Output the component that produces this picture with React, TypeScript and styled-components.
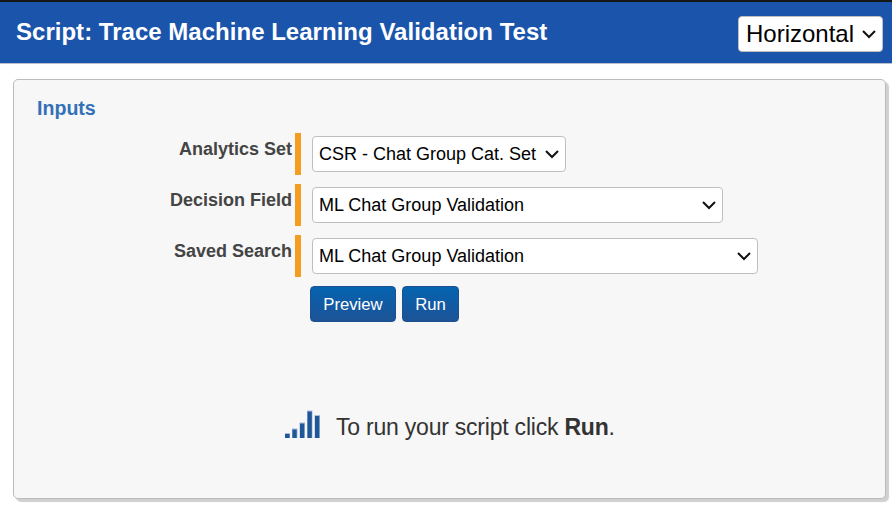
import React from "react";
import styled, { createGlobalStyle } from "styled-components";

const GlobalStyle = createGlobalStyle`
  * { box-sizing: border-box; }
  body {
    margin: 0;
    background: #fff;
    font-family: "Liberation Sans", Arial, sans-serif;
    color: #333;
    overflow: hidden;
  }
`;

const Page = styled.div`
  height: 507px;
`;

const Header = styled.header`
  display: flex;
  justify-content: space-between;
  align-items: flex-start;
  height: 64px;
  padding: 14px 9px 0 16px;
  background: #1b54ab;
  border-top: 2px solid #151719;
  border-bottom: 1px solid #b9c0cb;
`;

const Title = styled.h1`
  margin: 2px 0 0;
  font-size: 24px;
  line-height: 28px;
  font-weight: 700;
  letter-spacing: 0.02px;
  white-space: nowrap;
  color: #fff;
`;

const Picker = styled.button<{ $width: number; $large?: boolean }>`
  display: flex;
  align-items: center;
  justify-content: space-between;
  flex: none;
  width: ${(p) => p.$width}px;
  height: 36px;
  padding: 0 5px 0 ${(p) => (p.$large ? 7 : 6)}px;
  border: 1px solid #bfbfbf;
  border-radius: 4px;
  background: #fff;
  color: #000;
  font-family: inherit;
  font-size: ${(p) => (p.$large ? 24 : 18)}px;
  line-height: 1;
  white-space: nowrap;
`;

const Chevron = styled.svg`
  flex: none;
  width: 16px;
  height: 10px;
  fill: none;
  stroke: #111;
  stroke-width: 2;
`;

const Panel = styled.main`
  width: 873px;
  height: 420px;
  margin: 15px 0 0 13px;
  padding: 16px 23px 0;
  background: #f7f7f7;
  border: 1px solid #bcbcbc;
  border-radius: 5px;
  box-shadow: 3px 3px 1px #d0d0d0;
`;

const SectionTitle = styled.h2`
  margin: 0 0 13px;
  font-size: 19.6px;
  line-height: 24px;
  font-weight: 700;
  color: #3470b8;
`;

const Fields = styled.div`
  display: grid;
  gap: 9px;
`;

const Field = styled.div`
  display: grid;
  grid-template-columns: 256px 6px auto;
  justify-content: start;
  align-items: center;
  height: 42px;
`;

const Label = styled.label`
  align-self: start;
  padding: 4px 1px 0 0;
  text-align: right;
  font-size: 18px;
  line-height: 24px;
  font-weight: 700;
  color: #444;
`;

const RequiredBar = styled.span`
  height: 42px;
  margin-left: 2px;
  margin-right: -2px;
  background: #f59d20;
`;

const FieldControl = styled.div`
  margin-left: 13px;
`;

const Actions = styled.div`
  display: flex;
  gap: 6px;
  margin: 9px 0 0 273px;
`;

const ActionButton = styled.button<{ $width: number }>`
  width: ${(p) => p.$width}px;
  height: 36px;
  padding: 1px 0 0;
  border: 1px solid #1d5091;
  border-radius: 4px;
  background: linear-gradient(#0563b0, #1d5396);
  color: #fff;
  font-family: inherit;
  font-size: 16.7px;
`;

const Message = styled.div`
  display: flex;
  margin: 88px 0 0 247px;
  gap: 15px;
  font-size: 23px;
  letter-spacing: -0.22px;
  line-height: 30px;
  white-space: nowrap;
`;

const MessageText = styled.p`
  margin: 2px 0 0;
`;

const BarsIcon = styled.svg`
  width: 37px;
  height: 29px;
`;

const fields = [
  { label: "Analytics Set", value: "CSR - Chat Group Cat. Set", width: 254 },
  { label: "Decision Field", value: "ML Chat Group Validation", width: 411 },
  { label: "Saved Search", value: "ML Chat Group Validation", width: 446 },
];

function Select({ value, width, large }: { value: string; width: number; large?: boolean }) {
  return (
    <Picker type="button" aria-haspopup="listbox" $width={width} $large={large}>
      <span>{value}</span>
      <Chevron viewBox="0 0 16 10">
        <path d="M2 2l6 6 6-6" />
      </Chevron>
    </Picker>
  );
}

export default function App() {
  return (
    <Page>
      <GlobalStyle />
      <Header>
        <Title>Script: Trace Machine Learning Validation Test</Title>
        <Select value="Horizontal" width={145} large />
      </Header>
      <Panel>
        <SectionTitle>Inputs</SectionTitle>
        <Fields>
          {fields.map((f) => (
            <Field key={f.label}>
              <Label>{f.label}</Label>
              <RequiredBar />
              <FieldControl>
                <Select value={f.value} width={f.width} />
              </FieldControl>
            </Field>
          ))}
        </Fields>
        <Actions>
          <ActionButton type="button" $width={86}>Preview</ActionButton>
          <ActionButton type="button" $width={57}>Run</ActionButton>
        </Actions>
        <Message>
          <BarsIcon viewBox="0 0 37 29">
            <path
              fill="#a9bdd8"
              d="M1 23h5v5H1zM8 18.500h5.500v9.500H8zM15.500 12.500h5.500V28h-5.500zM23 0.500h5.500V28H23zM30.500 5H36v23h-5.500z"
            />
            <path
              fill="#205798"
              d="M1 24h4.600v4H1zM8.400 19.500h4.300V28H8.400zM16 13.500h4.300V28H16zM23.500 1.500h4.300V28h-4.300zM31 6h4.300v22H31z"
            />
          </BarsIcon>
          <MessageText>
            To run your script click <strong>Run</strong>.
          </MessageText>
        </Message>
      </Panel>
    </Page>
  );
}
